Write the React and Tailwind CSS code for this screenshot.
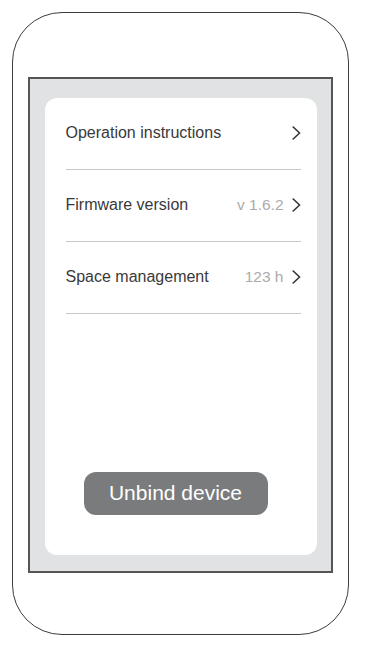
import React from "react";

function Chevron() {
  return (
    <svg width="9" height="14" viewBox="0 0 9 14" fill="none" className="shrink-0">
      <path d="M1.2 1 L7.6 7 L1.2 13" stroke="#333" strokeWidth="1.6" strokeLinecap="round" strokeLinejoin="round" />
    </svg>
  );
}

function Row({ label, value }) {
  return (
    <div className="h-[72px] flex items-center border-b border-[#c9c9c9]">
      <span className="text-[16px] text-[#3a3a3a] flex-1">{label}</span>
      {value && <span className="text-[15.5px] text-[#ababab] mr-[8px]">{value}</span>}
      <Chevron />
    </div>
  );
}

export default function App() {
  return (
    <div className="w-[366px] h-[649px] bg-white pt-[12px] pl-[12px]" style={{ fontFamily: '"Liberation Sans", Arial, sans-serif' }}>
      <div className="w-[337px] h-[623px] rounded-[50px] border-[1.5px] border-[#3c3c3c] pt-[63.5px] pl-[14.5px]">
        <div className="w-[305px] h-[496px] border-2 border-[#555] bg-[#e1e2e3] pt-[19px] pl-[15px]">
          <div className="w-[272px] h-[457px] bg-white rounded-[12px] flex flex-col">
            <div className="pl-[21px] pr-[16px]">
              <Row label="Operation instructions" />
              <Row label="Firmware version" value="v 1.6.2" />
              <Row label="Space management" value="123 h" />
            </div>
            <div className="mt-auto mb-[40px] ml-[39px] w-[184px] h-[43px] rounded-[12px] bg-[#7a7b7d] flex items-center justify-center">
              <span className="text-white text-[21px]">Unbind device</span>
            </div>
          </div>
        </div>
      </div>
    </div>
  );
}
